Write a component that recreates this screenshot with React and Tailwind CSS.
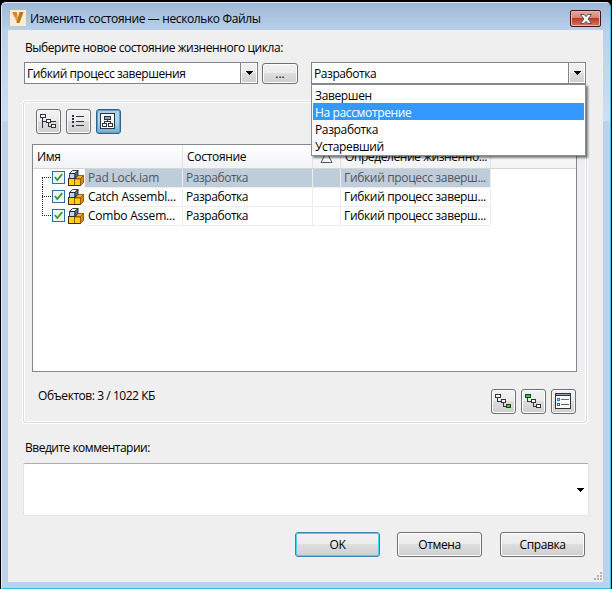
import { useState } from 'react';

const STATES = ['Завершен', 'На рассмотрение', 'Разработка', 'Устаревший'];

const FILES = [
  { name: 'Pad Lock.iam', state: 'Разработка', definition: 'Гибкий процесс заверш...' },
  { name: 'Catch Assembl...', state: 'Разработка', definition: 'Гибкий процесс заверш...' },
  { name: 'Combo Assem...', state: 'Разработка', definition: 'Гибкий процесс заверш...' },
];

const VaultIcon = () => (
  <svg className="w-4 h-4 shrink-0" viewBox="0 0 16 16">
    <rect width="16" height="16" fill="#fdebd2" />
    <path d="M2.500 2H6.500l2 7L7 13Z" fill="#e2a04a" />
    <path d="M9.500 2H13.500L9.500 13H6.500l1.500-5Z" fill="#b9741d" />
    <path d="M2.500 2H6.500l.8 3-3 2Z" fill="#c98a35" />
  </svg>
);

const ArrowDown = () => (
  <svg className="w-[7px] h-1" viewBox="0 0 7 4" shapeRendering="crispEdges">
    <path d="M0 0h7v1H0zM1 1h5v1H1zM2 2h3v1H2zM3 3h1v1H3z" fill="#000" />
  </svg>
);

const Icon = ({ children }) => (
  <svg className="w-[25px] h-[25px] shrink-0" viewBox="0 0 25 25" fill="none" stroke="#2d3440" shapeRendering="crispEdges">
    {children}
  </svg>
);

const TreeIcon = () => (
  <Icon>
    <rect x="4.5" y="5.5" width="5" height="3" fill="#fff" />
    <path d="M6.5 9v10M7 12.5h3M12.5 14v3.5H15M15 12.5h5" />
    <rect x="10.5" y="10.5" width="4" height="3" fill="#fff" />
    <rect x="15.5" y="15.5" width="4" height="3" fill="#fff" />
  </Icon>
);

const ListIcon = () => (
  <Icon>
    <path d="M6 7h2M6 10h2M6 13h2M6 17h2" strokeWidth="2" />
    <path d="M10 7.5h8M10 12.5h8M10 16.5h8" />
  </Icon>
);

const StructureIcon = () => (
  <Icon>
    <rect x="4.5" y="4.5" width="14" height="15" fill="#f5f8fb" />
    <rect x="8.5" y="7.5" width="6" height="3" fill="#9aa3ad" />
    <path d="M11.5 11v2M8.5 15v-2.5h6V15" />
    <rect x="6.5" y="14.5" width="4" height="3" fill="#fff" />
    <rect x="12.5" y="14.5" width="4" height="3" fill="#fff" />
  </Icon>
);

const StepsIcon = ({ first = '#fff', last = '#fff' }) => (
  <Icon>
    <path d="M6.5 9v3.5H10M12.5 14v3.5H15" />
    <rect x="4.5" y="5.5" width="5" height="3" fill={first} />
    <rect x="10.5" y="10.5" width="4" height="3" fill="#fff" />
    <rect x="15.5" y="15.5" width="4" height="3" fill={last} />
  </Icon>
);

const SettingsIcon = () => (
  <Icon>
    <rect x="4.5" y="4.5" width="15" height="15" fill="#fff" />
    <rect x="4.5" y="4.5" width="15" height="2" fill="#9aa3ad" />
    <rect x="6.5" y="9.5" width="2" height="2" stroke="#1683e8" />
    <path d="M10 10.5h8" stroke="#1683e8" />
    <rect x="6.5" y="14.5" width="2" height="2" stroke="#555c66" />
    <path d="M10 15.5h8" stroke="#555c66" />
  </Icon>
);

const AssemblyIcon = () => (
  <svg className="w-4 h-4 block" viewBox="0 0 16 16" stroke="#8a4a00" strokeWidth="0.8" strokeLinejoin="round">
    <path d="M12.500 8.500 15.500 5.500v7L12.500 15.500Z" fill="#d98a10" />
    <path d="M6.500 8.500 9.500 5.500h6l-3 3Z" fill="#ffb42a" />
    <path d="M.5 8.500h6v7h-6Z" fill="#ffd21a" />
    <path d="M6.500 9h6v6.500h-6Z" fill="#ffcc1a" />
    <path d="M.5 8v7.500h12" fill="none" stroke="#2a1a08" />
    <path d="M1.500 3.500 4.500.5h5.500l-3 3Z" fill="#f2f7fc" stroke="#101418" />
    <path d="M1.500 3.500H7v5H1.500Z" fill="#bcd6f2" stroke="#101418" />
    <path d="M7 3.500 10 .5v5l-3 3Z" fill="#54708f" stroke="#101418" />
  </svg>
);

const CheckBox = () => (
  <span className="w-[13px] h-[13px] shrink-0 border border-[#2f6f9f] bg-[#f3f5f5] flex items-center justify-center">
    <svg className="w-[9px] h-[9px]" viewBox="0 0 9 9" fill="none" stroke="#2f9e33" strokeWidth="1.8">
      <path d="M.8 4 3.300 7 8.200 1.200" />
    </svg>
  </span>
);

const ToolButton = ({ active, children }) => (
  <button
    className={`w-[25px] h-[25px] rounded-[3px] border flex items-center justify-center ${
      active
        ? 'border-[#2c628b] bg-linear-to-b from-[#a9cfe6] via-[#b0d6ec] to-[#5fb0dc] shadow-[inset_0_0_0_1px_#6f9dbd]'
        : 'border-[#707070] bg-[linear-gradient(#f2f2f2_0%,#ebebeb_48%,#dddddd_50%,#cfcfcf_100%)] shadow-[inset_0_0_0_1px_#fcfcfc]'
    }`}
  >
    {children}
  </button>
);

const PushButton = ({ primary, children }) => (
  <button
    className={`w-[85px] h-[25px] rounded-[3px] border flex items-center justify-center bg-[linear-gradient(#f2f2f2_0%,#ebebeb_48%,#dddddd_50%,#cfcfcf_100%)] ${
      primary ? 'border-[#3c7fb1] shadow-[inset_0_0_0_1px_#46d2f5]' : 'border-[#707070] shadow-[inset_0_0_0_1px_#fcfcfc]'
    }`}
  >
    {children}
  </button>
);

const ComboBox = ({ className, onToggle, children }) => (
  <div className={`h-[22px] flex border border-[#7f858c] bg-white ${className}`}>
    <span className="flex-1 pl-0.5 leading-[21px]">{children}</span>
    <button onClick={onToggle}
      className="w-[17px] border-l border-[#7f858c] flex items-center justify-center bg-[linear-gradient(#f2f2f2_0%,#ebebeb_48%,#dddddd_50%,#cfcfcf_100%)] shadow-[inset_0_0_0_1px_#fcfcfc]">
      <ArrowDown />
    </button>
  </div>
);

const TitleBar = () => (
  <div className="h-[27px] pt-[7px] pl-0.5 pr-0.5 flex items-start">
    <VaultIcon />
    <span className="ml-1 leading-[17px] tracking-[-0.37px] flex-1">Изменить состояние — несколько Файлы</span>
    <button className="w-[31px] h-[17px] rounded-[2px] border border-[#43141b] flex items-center justify-center bg-[linear-gradient(#e8a79d_0%,#d98073_48%,#b93c28_50%,#d4765f_100%)] shadow-[inset_0_0_0_1px_#e9b5ab]">
      <svg className="w-3 h-[10px]" viewBox="0 0 12 10">
        <path d="M.5.5h3.700L6 2.700 7.800.5h3.700L8 5l3.500 4.500H7.800L6 7.300 4.200 9.500H.5L4 5Z" fill="#fff" stroke="#535666" />
      </svg>
    </button>
  </div>
);

const FileTable = () => (
  <div className="h-[228px] w-[545px] border border-[#828790] bg-white">
    <div className="h-6 flex leading-[23px] border-b border-[#d5d5d5] bg-linear-to-b from-white to-[#f2f3f5]">
      <span className="w-[150px] pl-1 border-r border-[#e0e3e8]">Имя</span>
      <span className="w-[130px] pl-1 border-r border-[#e0e3e8]">Состояние</span>
      <span className="w-7 pt-1.5 pl-[7px] border-r border-[#e0e3e8]">
        <svg className="w-[13px] h-3" viewBox="0 0 13 12" fill="#fff" stroke="#555">
          <path d="M6.500 1 12 11.500H1Z" />
        </svg>
      </span>
      <span className="w-[150px] pl-1 border-r border-[#e0e3e8] whitespace-nowrap tracking-[-0.42px]">Определение жизненно...</span>
    </div>

    {FILES.map((file, i) => {
      const cell = i === 0 ? 'bg-[#bfcddb] text-[#51565c]' : 'bg-white';
      return (
        <div key={file.name} className="h-[19px] flex leading-[18px] whitespace-nowrap">
          <div className="w-[52px] h-[17px] flex items-center">
            {/* ветка дерева */}
            <svg className="w-[10px] h-[19px] ml-[9px] shrink-0" viewBox="0 0 10 19" stroke="#222" strokeDasharray="1 1" shapeRendering="crispEdges">
              <path d={i === 0 ? 'M.5 10v9' : i === 1 ? 'M.5 0v19' : 'M.5 1v9'} />
              <path d="M0 9.500h10" />
            </svg>
            <CheckBox />
            <span className="ml-[3px]"><AssemblyIcon /></span>
          </div>
          <span className={`w-[98px] pl-[3px] border-r border-b border-[#ededed] tracking-[-0.22px] ${cell}`}>{file.name}</span>
          <span className={`w-[130px] pl-[3px] border-r border-b border-[#ededed] tracking-[-0.45px] ${cell}`}>{file.state}</span>
          <span className={`w-7 border-r border-b border-[#ededed] ${cell}`} />
          <span className={`w-[150px] pl-[3px] border-r border-b border-[#ededed] tracking-[-0.34px] ${cell}`}>{file.definition}</span>
        </div>
      );
    })}
  </div>
);

const App = () => {
  const [open, setOpen] = useState(true);

  return (
    <div className="w-[612px] h-[589px] overflow-hidden bg-black pl-px pt-0.5 pr-px text-[12px] tracking-[-0.3px] text-black font-['Open_Sans','Noto_Sans',sans-serif]">
      <div className="h-[587px] rounded-t-[5px] border border-[#dfe9f5] border-b-[#25c6dd] border-r-[#3cc4e4] pl-1.5 pr-[7px] bg-[linear-gradient(#9db8d6_0px,#b9d1ea_28px,#cddff2_118px,#bad2eb_119px)]">
        <TitleBar />

        <div className="h-[552px] bg-[#efefef] pt-2.5 px-[15px] relative">
          <div className="pl-0.5 leading-4 tracking-[-0.43px]">Выберите новое состояние жизненного цикла:</div>

          <div className="mt-1.5 pl-px flex tracking-[-0.43px]">
            <ComboBox className="w-[234px]">Гибкий процесс завершения</ComboBox>
            <button className="w-9 h-[21px] mt-px ml-1 rounded-[3px] border border-[#707070] leading-[18px] tracking-normal bg-[linear-gradient(#f2f2f2_0%,#ebebeb_48%,#dddddd_50%,#cfcfcf_100%)] shadow-[inset_0_0_0_1px_#fcfcfc]">...</button>
            <div className="ml-[13px] relative">
              <ComboBox className="w-[275px]" onToggle={() => setOpen((v) => !v)}>Разработка</ComboBox>
              {open && (
                <ul className="absolute top-[22px] left-0 w-[275px] z-10 p-px border border-[#8a8f96] bg-white shadow-[2px_2px_2px_rgba(0,0,0,0.5)] tracking-[-0.36px]">
                  {STATES.map((state) => (
                    <li key={state} className={`h-[17px] leading-[19px] pl-0.5 ${state === 'На рассмотрение' ? 'bg-[#3399ff] text-white' : ''}`}>
                      {state}
                    </li>
                  ))}
                </ul>
              )}
            </div>
          </div>

          {/* список файлов */}
          <div className="mt-[17px] h-[322px] w-[564px] rounded-[3px] border border-[#d5dfe5] shadow-[inset_0_0_0_1px_#fff,0_0_0_1px_#fff] pt-[7px] px-2">
            <div className="flex gap-[5px] pl-1 mb-2.5">
              <ToolButton><TreeIcon /></ToolButton>
              <ToolButton><ListIcon /></ToolButton>
              <ToolButton active><StructureIcon /></ToolButton>
            </div>
            <FileTable />
            <div className="mt-[17px] pl-1.5 pr-0.5 flex">
              <span className="flex-1 leading-[14px] tracking-[-0.45px]">Объектов: 3 / 1022 КБ</span>
              <div className="flex gap-[5px]">
                <ToolButton><StepsIcon last="#00f000" /></ToolButton>
                <ToolButton><StepsIcon first="#00f000" /></ToolButton>
                <ToolButton><SettingsIcon /></ToolButton>
              </div>
            </div>
          </div>

          <div className="mt-[17px] pl-0.5 leading-4 tracking-[-0.5px]">Введите комментарии:</div>
          <div className="mt-[7px] h-[53px] w-[566px] rounded-[2px] border border-[#e2e3ea] border-t-[#abadb3] bg-white flex items-center justify-end pr-1">
            <ArrowDown />
          </div>

          <div className="mt-4 flex justify-end pr-[3px] tracking-[-0.4px]">
            <PushButton primary>OK</PushButton>
            <div className="ml-[17px]"><PushButton>Отмена</PushButton></div>
            <div className="ml-[18px]"><PushButton>Справка</PushButton></div>
          </div>

          <svg className="absolute right-px bottom-0.5 w-2 h-2" viewBox="0 0 8 8" fill="#b4b4b4">
            <path d="M6 0h2v2H6zM3 3h2v2H3zM6 3h2v2H6zM0 6h2v2H0zM3 6h2v2H3zM6 6h2v2H6z" />
          </svg>
        </div>
      </div>
    </div>
  );
};

export default App;
